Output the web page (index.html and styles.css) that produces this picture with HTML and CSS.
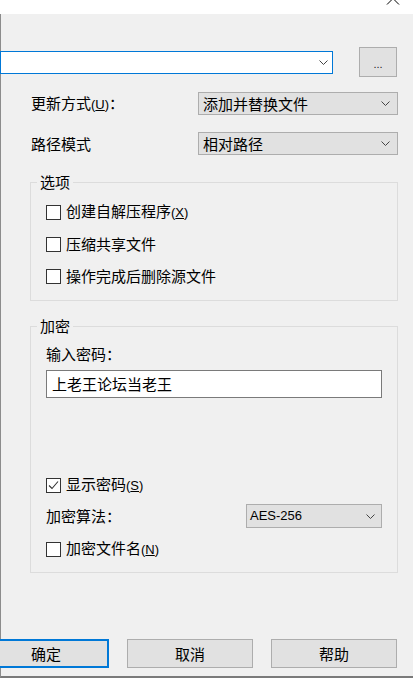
FILE: index.html
```html
<!DOCTYPE html>
<html lang="zh-CN">
<head>
<meta charset="utf-8">
<title>压缩文件名和参数</title>
<link rel="stylesheet" href="styles.css">
</head>
<body>
<div class="window">
  <div class="titlebar">
    <svg class="close" width="14" height="6" viewBox="0 0 14 6"><path d="M1 -7.5 L13 4.5 M13 -7.5 L1 4.5" stroke="#000" stroke-width="1" fill="none"/></svg>
  </div>
  <div class="client">
    <div class="path-row">
      <div class="combo">
        <svg class="chev" width="9" height="5" viewBox="0 0 9 5"><path d="M0.5 0.5 L4.5 4.5 L8.5 0.5" stroke="#444" stroke-width="1" fill="none"/></svg>
      </div>
      <div class="btn browse"><span class="dots">...</span></div>
    </div>

    <div class="form-row first">
      <span class="label">更新方式<span class="l">(<u>U</u>)</span>：</span>
      <div class="select wide"><span>添加并替换文件</span><svg class="chev" width="9" height="5" viewBox="0 0 9 5"><path d="M0.5 0.5 L4.5 4.5 L8.5 0.5" stroke="#444" stroke-width="1" fill="none"/></svg></div>
    </div>
    <div class="form-row second">
      <span class="label">路径模式</span>
      <div class="select wide"><span>相对路径</span><svg class="chev" width="9" height="5" viewBox="0 0 9 5"><path d="M0.5 0.5 L4.5 4.5 L8.5 0.5" stroke="#444" stroke-width="1" fill="none"/></svg></div>
    </div>

    <fieldset class="group options">
      <legend>选项</legend>
      <div class="chk first"><span class="box"></span><span>创建自解压程序<span class="l">(<u>X</u>)</span></span></div>
      <div class="chk"><span class="box"></span><span>压缩共享文件</span></div>
      <div class="chk"><span class="box"></span><span>操作完成后删除源文件</span></div>
    </fieldset>

    <fieldset class="group crypt">
      <legend>加密</legend>
      <div class="pw-label">输入密码：</div>
      <div class="pw-input">上老王论坛当老王</div>
      <div class="chk show-pw"><span class="box"><svg width="13" height="13" viewBox="0 0 13 13"><path d="M2 6.5 L5 9.5 L11 2.5" stroke="#333" stroke-width="1.1" fill="none"/></svg></span><span>显示密码<span class="l">(<u>S</u>)</span></span></div>
      <div class="algo-row">
        <span>加密算法：</span>
        <div class="select algo"><span class="l">AES-256</span><svg class="chev" width="9" height="5" viewBox="0 0 9 5"><path d="M0.5 0.5 L4.5 4.5 L8.5 0.5" stroke="#444" stroke-width="1" fill="none"/></svg></div>
      </div>
      <div class="chk enc-name"><span class="box"></span><span>加密文件名<span class="l">(<u>N</u>)</span></span></div>
    </fieldset>

    <div class="buttons">
      <div class="btn ok">确定</div>
      <div class="btn cancel">取消</div>
      <div class="btn help">帮助</div>
    </div>
  </div>
</div>
</body>
</html>
```

FILE: styles.css
```css
* { box-sizing: border-box; }
html, body { margin: 0; padding: 0; }
body {
  width: 413px;
  height: 678px;
  overflow: hidden;
  background: #f0f0f0;
  font-family: "Noto Sans CJK SC", "Liberation Sans", sans-serif;
  font-size: 15px;
  color: #000;
}
.window {
  width: 413px;
  height: 678px;
  display: flex;
  flex-direction: column;
  overflow: hidden;
}
.titlebar {
  height: 14px;
  background: #fff;
  display: flex;
  justify-content: flex-end;
  align-items: flex-start;
  padding-right: 13px;
}
.close { display: block; }
.client {
  flex: 1;
  border-left: 1px solid #8c8c8c;
  border-bottom: 2px solid #7a7a7a;
  display: flex;
  flex-direction: column;
}
.l {
  font-family: "Liberation Sans", sans-serif;
  font-size: 13px;
}
.chev { display: block; flex: none; }

.path-row {
  margin-top: 33px;
  margin-left: -1px;
  display: flex;
  align-items: center;
}
.combo {
  width: 333px;
  height: 23px;
  background: #fff;
  border: 1px solid #0078d7;
  display: flex;
  justify-content: flex-end;
  align-items: center;
  padding-right: 4px;
}
.btn {
  background: #e1e1e1;
  border: 1px solid #adadad;
  display: flex;
  align-items: center;
  justify-content: center;
  height: 29px;
  line-height: 20px;
  flex: none;
}
.browse {
  margin-left: 26px;
  width: 38px;
  height: 30px;
}
.dots {
  font-family: "Liberation Sans", sans-serif;
  font-size: 11px;
  line-height: 11px;
  padding-top: 4px;
  color: #222;
}

.form-row {
  display: flex;
  align-items: center;
  justify-content: space-between;
  padding-left: 30px;
  padding-right: 15px;
  line-height: 20px;
}
.form-row.first { margin-top: 15px; }
.form-row.second { margin-top: 17px; }
.select {
  height: 23px;
  background: #e1e1e1;
  border: 1px solid #adadad;
  display: flex;
  align-items: center;
  justify-content: space-between;
  padding: 0 7px 0 4px;
  line-height: 20px;
}
.select.wide { width: 200px; }

.group {
  margin: 17px 15px 0 29px;
  padding: 0 15px 14px 15px;
  border: 1px solid #dcdcdc;
  min-width: 0;
}
.group.crypt {
  margin-top: 15px;
  padding-bottom: 13px;
}
.group legend {
  padding: 0 3px;
  margin-left: -9px;
  height: 20px;
  line-height: 20px;
}
.chk {
  display: flex;
  align-items: center;
  height: 20px;
  line-height: 20px;
  margin-top: 12px;
}
.chk.first { margin-top: 10px; }
.box {
  width: 15px;
  height: 15px;
  border: 1px solid #333;
  background: #fff;
  margin-right: 5px;
  flex: none;
  display: flex;
  align-items: center;
  justify-content: center;
}
.box svg { display: block; }

.pw-label {
  margin-top: 8px;
  height: 20px;
  line-height: 20px;
}
.pw-input {
  margin-top: 6px;
  height: 28px;
  background: #fff;
  border: 1px solid #7a7a7a;
  padding-left: 5px;
  display: flex;
  align-items: center;
  line-height: 20px;
}
.chk.show-pw { margin-top: 77px; }
.algo-row {
  margin-top: 9px;
  display: flex;
  align-items: center;
  justify-content: space-between;
  line-height: 20px;
}
.select.algo {
  width: 136px;
  height: 24px;
  padding: 0 6px 0 3px;
}
.chk.enc-name { margin-top: 11px; }

.buttons {
  margin-top: 66px;
  display: flex;
}
.btn.ok {
  width: 126px;
  margin-left: -18px;
  border: 2px solid #0078d7;
}
.btn.cancel {
  width: 126px;
  margin-left: 18px;
}
.btn.help {
  width: 126px;
  margin-left: 18px;
}
```
